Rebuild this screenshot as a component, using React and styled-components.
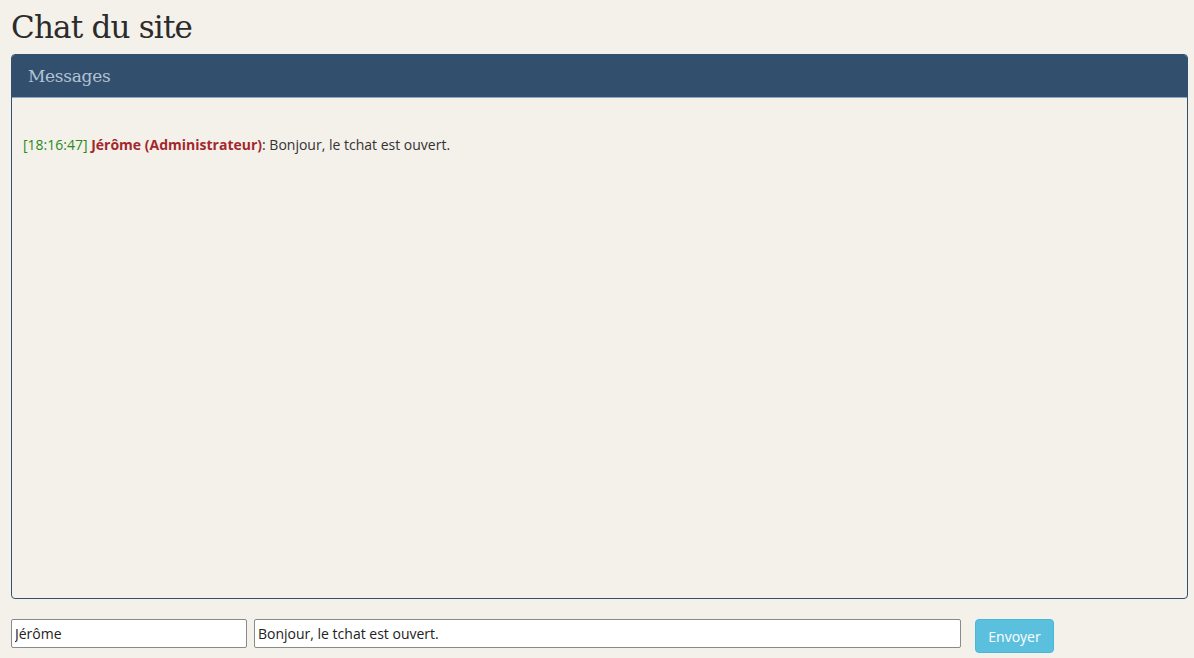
import React from 'react';
import styled, { createGlobalStyle } from 'styled-components';

const GlobalStyle = createGlobalStyle`
  html, body {
    margin: 0;
    padding: 0;
    background: #f4f0ea;
  }
  body {
    font-family: "Open Sans", "Noto Sans", sans-serif;
    font-size: 14px;
    color: #333;
  }
`;

const Page = styled.div`
  padding: 0 6px 0 11px;
  height: 658px;
  box-sizing: border-box;
  display: flex;
  flex-direction: column;
`;

const Title = styled.h1`
  font-family: "DejaVu Serif", "Liberation Serif", serif;
  font-weight: 400;
  font-size: 31px;
  line-height: 36px;
  letter-spacing: -0.8px;
  color: #2b2b2b;
  margin: 9px 0 9px;
`;

const Panel = styled.section`
  border: 1px solid #34506f;
  border-radius: 4px;
  overflow: hidden;
  display: flex;
  flex-direction: column;
  height: 545px;
  box-sizing: border-box;
`;

const PanelHeader = styled.header`
  background: #324f6e;
  height: 42px;
  border-bottom: 1px solid #8ea6c2;
  display: flex;
  align-items: center;
  padding: 0 16px;
  font-family: "DejaVu Serif", "Liberation Serif", serif;
  font-weight: 200;
  font-size: 17px;
  color: #b3c3d5;
  letter-spacing: -0.3px;
`;

const PanelBody = styled.div`
  flex: 1;
  padding: 37px 11px;
`;

const Line = styled.p`
  margin: 0;
  line-height: 20px;
`;

const Time = styled.span`
  color: #2a8a1e;
`;

const Author = styled.strong`
  color: #a3282c;
  font-weight: 700;
`;

const Form = styled.form`
  display: flex;
  align-items: flex-start;
  margin-top: 20px;
`;

const Field = styled.input`
  box-sizing: border-box;
  height: 29px;
  width: ${p => p.$width}px;
  margin-right: ${p => p.$gap}px;
  border: 1px solid #8a8a8a;
  border-radius: 2px;
  background: #fff;
  padding: 0 3px;
  font-family: "Open Sans", "Noto Sans", sans-serif;
  font-size: 14px;
  color: #222;
  outline: none;
`;

const SendButton = styled.button`
  box-sizing: border-box;
  width: 79px;
  height: 34px;
  background: #5bc0de;
  border: 1px solid #46b8da;
  border-radius: 4px;
  color: #fff;
  font-family: "Open Sans", "Noto Sans", sans-serif;
  font-size: 14px;
  cursor: pointer;
`;

export default function App() {
  return (
    <>
      <GlobalStyle />
      <Page>
        <Title>Chat du site</Title>
        <Panel>
          <PanelHeader>Messages</PanelHeader>
          <PanelBody>
            <Line>
              <Time>[18:16:47]</Time> <Author>Jérôme (Administrateur)</Author>: Bonjour, le tchat est ouvert.
            </Line>
          </PanelBody>
        </Panel>
        <Form onSubmit={e => e.preventDefault()}>
          <Field $width={236} $gap={7} defaultValue="Jérôme" />
          <Field $width={707} $gap={14} defaultValue="Bonjour, le tchat est ouvert." />
          <SendButton type="submit">Envoyer</SendButton>
        </Form>
      </Page>
    </>
  );
}
